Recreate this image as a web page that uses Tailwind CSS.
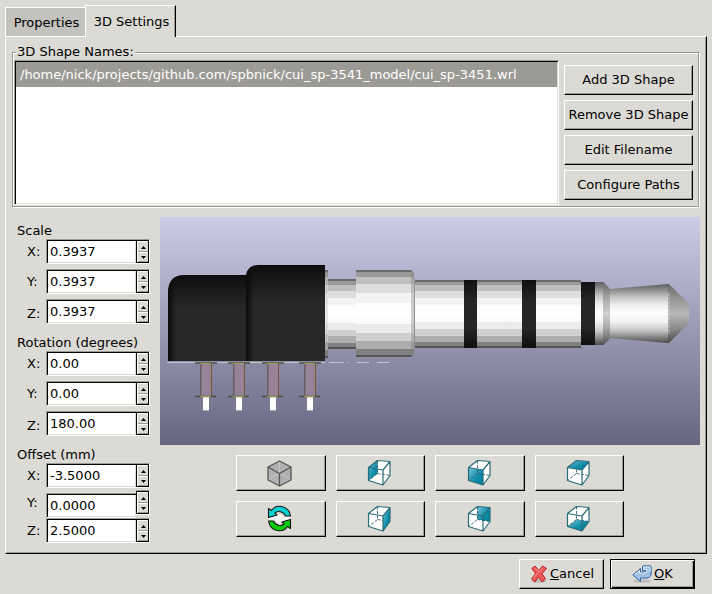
<!DOCTYPE html>
<html lang="en">
<head>
<meta charset="utf-8">
<title>3D Settings</title>
<script src="https://cdn.jsdelivr.net/npm/@tailwindcss/browser@4"></script>
</head>
<body class="flex min-h-screen flex-col bg-[#dcdad5] px-[5px] pt-[5px] font-['DejaVu_Sans',sans-serif] text-[13px] leading-4 text-black">

<!-- Shared drawing parts -->
<svg class="absolute h-0 w-0" aria-hidden="true">
  <defs>
    <linearGradient id="teal" x1="0" y1="0" x2="1" y2="1"><stop offset="0" stop-color="#7cc4dc"/><stop offset=".6" stop-color="#0a8ba6"/><stop offset="1" stop-color="#057f9b"/></linearGradient>
    <g id="hidden-edges" fill="none" stroke="#31606c" stroke-width=".9" stroke-dasharray="3 1.5"><path d="M10.500 1.500V14.500L1.500 21.500M10.500 14.500L23 16.500"/></g>
    <g id="edges" fill="none" stroke="#2b6c79" stroke-width="1.200" stroke-linejoin="round"><path d="M10.500 1.500L23 2.500L16 11L1.500 8.500ZM1.500 8.500V21.500L16 26V11M23 2.500V16.500L16 26"/></g>
    <path id="body" fill="#fff" d="M10.500 1.500L23 2.500V16.500L16 26L1.500 21.500V8.500Z"/>
  </defs>
</svg>

<div role="tablist" class="relative z-10 -mb-px flex items-end">
  <button role="tab" aria-selected="false" class="mb-px h-[29px] w-20 border-t border-l border-white bg-[#c4c2bd] pt-px pl-0.5 text-center">Properties</button>
  <button role="tab" aria-selected="true" class="h-8 w-[91px] border-t border-r border-l border-white border-r-black bg-[#dcdad5] pl-0.5 text-center shadow-[inset_-1px_0_0_#9c9a94]">3D Settings</button>
</div>

<main role="tabpanel" class="border border-white border-r-black border-b-black px-1.5 pt-[7px] pb-[10px] shadow-[inset_-1px_-1px_0_#9c9a94]">
  <fieldset class="mr-px border border-[#9c9a94] pr-[5px] pb-px pl-px shadow-[inset_1px_1px_0_#fff,1px_1px_0_#fff]">
    <legend class="ml-0.5 bg-[#dcdad5] px-px">3D Shape Names:</legend>
    <div class="flex gap-[5px]">
      <ul role="listbox" aria-label="3D Shape Names" class="h-[145px] min-w-0 flex-1 border border-[#9c9a94] border-r-white border-b-white bg-white pt-px pl-px shadow-[inset_1px_1px_0_#000,inset_-1px_-1px_0_#dcdad5]">
        <li role="option" aria-selected="true" class="mr-px h-[25px] truncate bg-[#9c9a94] pl-1 leading-[25px] text-white">/home/nick/projects/github.com/spbnick/cui_sp-3541_model/cui_sp-3451.wrl</li>
      </ul>
      <div class="flex w-[129px] flex-col gap-[5px] pt-[5px]">
        <button class="h-[30px] border border-white border-r-black border-b-black whitespace-nowrap shadow-[inset_-1px_-1px_0_#9c9a94]">Add 3D Shape</button>
        <button class="h-[30px] border border-white border-r-black border-b-black whitespace-nowrap shadow-[inset_-1px_-1px_0_#9c9a94]">Remove 3D Shape</button>
        <button class="h-[30px] border border-white border-r-black border-b-black whitespace-nowrap shadow-[inset_-1px_-1px_0_#9c9a94]">Edit Filename</button>
        <button class="h-[30px] border border-white border-r-black border-b-black whitespace-nowrap shadow-[inset_-1px_-1px_0_#9c9a94]">Configure Paths</button>
      </div>
    </div>
  </fieldset>

  <div class="mt-[10px] flex gap-[10px] pl-[5px]">
    <div id="fields" class="flex w-[133px] shrink-0 flex-col gap-[5px]"></div>

    <div class="min-w-0 flex-1">
      <svg role="img" aria-label="3D model preview" viewBox="0 0 540 228" class="block w-full">
        <defs>
          <linearGradient id="sky" x1="0" y1="0" x2="0" y2="1"><stop offset="0" stop-color="#cccce6"/><stop offset="1" stop-color="#666680"/></linearGradient>
          <linearGradient id="metal" x1="0" y1="0" x2="0" y2="1">
            <stop offset="0" stop-color="#6b6b6b"/><stop offset=".025" stop-color="#6b6b6b"/>
            <stop offset=".025" stop-color="#999"/><stop offset=".08" stop-color="#999"/>
            <stop offset=".08" stop-color="#bfbfbf"/><stop offset=".165" stop-color="#bfbfbf"/>
            <stop offset=".165" stop-color="#dedede"/><stop offset=".265" stop-color="#dedede"/>
            <stop offset=".265" stop-color="#f3f3f3"/><stop offset=".375" stop-color="#f3f3f3"/>
            <stop offset=".375" stop-color="#fcfcfc"/><stop offset=".5" stop-color="#fff"/><stop offset=".625" stop-color="#fafafa"/>
            <stop offset=".625" stop-color="#ebebeb"/><stop offset=".725" stop-color="#ebebeb"/>
            <stop offset=".725" stop-color="#d0d0d0"/><stop offset=".82" stop-color="#d0d0d0"/>
            <stop offset=".82" stop-color="#adadad"/><stop offset=".91" stop-color="#adadad"/>
            <stop offset=".91" stop-color="#808080"/><stop offset=".975" stop-color="#808080"/>
            <stop offset=".975" stop-color="#555"/><stop offset="1" stop-color="#555"/>
          </linearGradient>
          <linearGradient id="tip" x1="0" y1="0" x2="0" y2="1"><stop offset="0" stop-color="#5c5c5c"/><stop offset=".1" stop-color="#8c8c8c"/><stop offset=".22" stop-color="#c4c4c4"/><stop offset=".36" stop-color="#f0f0f0"/><stop offset=".5" stop-color="#fff"/><stop offset=".64" stop-color="#f2f2f2"/><stop offset=".78" stop-color="#c8c8c8"/><stop offset=".9" stop-color="#858585"/><stop offset="1" stop-color="#4a4a4a"/></linearGradient>
          <linearGradient id="cone" x1="0" y1="0" x2="0" y2="1"><stop offset="0" stop-color="#686868"/><stop offset=".25" stop-color="#959595"/><stop offset=".5" stop-color="#b8b8b8"/><stop offset=".75" stop-color="#8c8c8c"/><stop offset="1" stop-color="#4c4c4c"/></linearGradient>
          <linearGradient id="neck" x1="0" y1="0" x2="0" y2="1"><stop offset="0" stop-color="#666"/><stop offset=".3" stop-color="#b0b0b0"/><stop offset=".5" stop-color="#cfcfcf"/><stop offset=".7" stop-color="#b0b0b0"/><stop offset="1" stop-color="#555"/></linearGradient>
          <linearGradient id="black" x1="0" y1="0" x2="0" y2="1"><stop offset="0" stop-color="#0c0c0c"/><stop offset=".16" stop-color="#191919"/><stop offset=".38" stop-color="#282828"/><stop offset="1" stop-color="#282828"/></linearGradient>
          <linearGradient id="ring" x1="0" y1="0" x2="0" y2="1"><stop offset="0" stop-color="#101010"/><stop offset=".3" stop-color="#262626"/><stop offset=".7" stop-color="#262626"/><stop offset="1" stop-color="#101010"/></linearGradient>
          <linearGradient id="side" x1="0" y1="0" x2="1" y2="0"><stop offset="0" stop-color="#0a0a0a"/><stop offset="1" stop-color="#0a0a0a" stop-opacity="0"/></linearGradient>
          <g id="pin">
            <path fill="#665f62" d="M-6 0H6V33H-6Z"/><path fill="#968397" d="M-4.500 0H5V33H-4.500Z"/><path stroke="#765735" d="M5.500 1V32"/>
            <path fill="#fff" d="M-3 34H3V47H-3Z"/><path fill="#aaa" d="M-3 47H3V48H-3Z"/>
            <path stroke="#47503c" stroke-width="1.300" d="M-11 0H11M-11 33.500H10"/><path stroke="#a19a55" d="M-6 0.500H5M-6 33.500H5"/>
          </g>
        </defs>
        <rect width="540" height="228" fill="url(#sky)"/>
        <path stroke="#c4c3cc" d="M7 145.500H165M169 145.500H184M188 145.500H189M197 145.500H209M217 145.500H229"/>
        <rect x="164" y="53" width="4" height="88" fill="url(#metal)"/><rect x="164" y="53" width="4" height="88" fill="#666" opacity=".15"/>
        <rect x="168" y="62" width="28" height="70" fill="url(#metal)"/>
        <path d="M196 53H251L254 56V137L251 140H196Z" fill="url(#metal)"/>
        <path d="M251 53L254 56V137L251 140Z" fill="#777" opacity=".35"/>
        <rect x="255" y="63" width="166" height="68" fill="url(#metal)"/>
        <path stroke="#888" opacity=".6" d="M254.500 60V133"/>
        <rect x="304" y="63" width="13" height="68" fill="url(#ring)"/>
        <rect x="362" y="63" width="14" height="68" fill="url(#ring)"/>
        <rect x="421" y="65" width="14" height="63" fill="url(#ring)"/>
        <path d="M435 65H443L450 72V122L443 128H435Z" fill="url(#tip)"/>
        <path d="M443 65L450 72V121L443 128Z" fill="url(#neck)"/>
        <path d="M450 72L508 67L510 68V125L508 126L450 121Z" fill="url(#tip)"/>
        <path d="M508 67L511 69L529 87V106L511 124L508 126Z" fill="url(#cone)"/>
        <path fill="none" stroke="#ddd" stroke-dasharray="3 1" opacity=".7" d="M509 76V117"/>
        <use href="#pin" x="46" y="146"/><use href="#pin" x="79" y="146"/><use href="#pin" x="113" y="146"/><use href="#pin" x="150" y="146"/>
        <path fill="url(#black)" d="M8 144V74Q9 58 24 58H88V144Z"/>
        <path fill="url(#side)" d="M8 144V74Q9 64 16 60V144Z"/>
        <path fill="url(#black)" d="M86 144V58Q88 48 98 48H165V144Z"/>
        <path fill="url(#side)" d="M86 144V58Q87 52 94 49V144Z"/>
      </svg>

      <div id="views" class="mx-auto mt-[10px] grid w-[388px] grid-cols-4 gap-[10px]">
        <button aria-label="Orthographic view" class="flex h-9 items-center justify-center border border-white border-r-black border-b-black pr-0.5 shadow-[inset_-1px_-1px_0_#9c9a94]">
          <svg class="h-[27px] w-[25px]" viewBox="0 0 25 27"><path fill="#b0b0b0" stroke="#555" stroke-width="1.300" stroke-linejoin="round" d="M12.500 1L24 7V20L12.500 26L1 20V7Z"/><path fill="none" stroke="#c8c8c8" d="M12.500 2V13L2 19M12.500 13L23 19"/><path fill="none" stroke="#555" stroke-width="1.300" d="M1 7L12.500 13.500L24 7M12.500 13.500V26"/></svg>
        </button>
        <button aria-label="Left view" class="flex h-9 items-center justify-center border border-white border-r-black border-b-black pr-0.5 pb-0.5 shadow-[inset_-1px_-1px_0_#9c9a94]">
          <svg class="h-[27px] w-6" viewBox="0 0 24 27"><use href="#body"/><path fill="url(#teal)" d="M10.500 1.500V14.500L1.500 21.500V8.500Z"/><use href="#hidden-edges"/><use href="#edges"/></svg>
        </button>
        <button aria-label="Front view" class="flex h-9 items-center justify-center border border-white border-r-black border-b-black pr-0.5 pb-0.5 shadow-[inset_-1px_-1px_0_#9c9a94]">
          <svg class="h-[27px] w-6" viewBox="0 0 24 27"><use href="#body"/><path fill="url(#teal)" d="M1.500 8.500L16 11V26L1.500 21.500Z"/><use href="#hidden-edges"/><use href="#edges"/></svg>
        </button>
        <button aria-label="Top view" class="flex h-9 items-center justify-center border border-white border-r-black border-b-black pr-0.5 pb-0.5 shadow-[inset_-1px_-1px_0_#9c9a94]">
          <svg class="h-[27px] w-6" viewBox="0 0 24 27"><use href="#body"/><use href="#hidden-edges"/><path fill="url(#teal)" d="M10.500 1.500L23 2.500L16 11L1.500 8.500Z"/><use href="#edges"/></svg>
        </button>
        <button aria-label="Reload" class="flex h-9 items-center justify-center border border-white border-r-black border-b-black pr-0.5 pb-0.5 shadow-[inset_-1px_-1px_0_#9c9a94]">
          <svg class="h-[27px] w-[25px]" viewBox="0 0 25 27" stroke="#151515" stroke-width="1.100" stroke-linejoin="round"><path fill="#f4f4f2" stroke="none" d="M2 12.500L10 10.500Q13 7.500 17 11.500L23 12V14.500L15 16.500Q12 19.500 8 15.500L2 15Z"/><path fill="#0cd0d0" d="M1.500 3.500L4.500 5.500C8.500 -.8 21.500 -.8 23.500 11H18.500C16.500 6 10.500 5.500 8 8L10 10L1.500 12.500Z"/><path fill="#05cc0a" d="M23.500 23.500L20.500 21.500C16.500 27.800 3.500 27.800 1.500 16H6.500C8.500 21 14.500 21.500 17 19L15 17L23.500 14.500Z"/></svg>
        </button>
        <button aria-label="Right view" class="flex h-9 items-center justify-center border border-white border-r-black border-b-black pr-0.5 pb-0.5 shadow-[inset_-1px_-1px_0_#9c9a94]">
          <svg class="h-[27px] w-6" viewBox="0 0 24 27"><use href="#body"/><use href="#hidden-edges"/><path fill="url(#teal)" d="M16 11L23 2.500V16.500L16 26Z"/><use href="#edges"/></svg>
        </button>
        <button aria-label="Back view" class="flex h-9 items-center justify-center border border-white border-r-black border-b-black pr-0.5 pb-0.5 shadow-[inset_-1px_-1px_0_#9c9a94]">
          <svg class="h-[27px] w-6" viewBox="0 0 24 27"><use href="#body"/><path fill="url(#teal)" d="M10.500 1.500L23 2.500V16.500L10.500 14.500Z"/><use href="#hidden-edges"/><use href="#edges"/></svg>
        </button>
        <button aria-label="Bottom view" class="flex h-9 items-center justify-center border border-white border-r-black border-b-black pr-0.5 pb-0.5 shadow-[inset_-1px_-1px_0_#9c9a94]">
          <svg class="h-[27px] w-6" viewBox="0 0 24 27"><use href="#body"/><path fill="url(#teal)" d="M10.500 14.500L23 16.500L16 26L1.500 21.500Z"/><use href="#hidden-edges"/><use href="#edges"/></svg>
        </button>
      </div>
    </div>
  </div>
</main>

<footer class="flex justify-end gap-1.5 py-[5px] pr-3">
  <button class="flex h-[30px] w-[85px] items-center justify-center gap-[3px] border border-white border-r-black border-b-black pl-0.5 shadow-[inset_-1px_-1px_0_#9c9a94]">
    <svg class="h-[18px] w-4" viewBox="0 0 16 18"><ellipse cx="8" cy="16" rx="8" ry="2" fill="#000" opacity=".12"/><path fill="#ee5a5a" stroke="#bd1f26" stroke-linejoin="round" d="M4 1L8 5.500L11.500 1L15.500 3.500L11 8.500L14.500 14L11 17L7.500 12L4 17L.6 14L4.500 8.500L.8 3.500Z"/><path fill="none" stroke="#f79a96" d="M4 2.500L8 7L12 2.500M2 14L6 8.500"/></svg>
    <span><u>C</u>ancel</span>
  </button>
  <button class="flex h-[30px] w-[85px] items-center justify-center gap-0.5 border border-black shadow-[inset_1px_1px_0_#fff,inset_-1px_-1px_0_#000,inset_-2px_-2px_0_#9c9a94]">
    <svg class="h-[18px] w-5" viewBox="0 0 20 18"><ellipse cx="10" cy="16" rx="9" ry="2" fill="#000" opacity=".12"/><path fill="#9fc1e6" stroke="#3566a5" stroke-linejoin="round" d="M.8 10L8.500 3.500V7H12Q14 7 14 5.500H10.500V1.500Q10.500 .8 11.500 .8H18Q19.200 .8 19.200 2V8Q19 13 14 13H8.500V16.500Z"/><path fill="none" stroke="#dbe9f7" d="M2.500 10L7.500 5.800V8.200H12Q15.300 8 15.300 4.500H11.800V2H18V7"/></svg>
    <span><u>O</u>K</span>
  </button>
</footer>

<script>
  const groups = [
    ['Scale', ['0.3937', '0.3937', '0.3937']],
    ['Rotation (degrees)', ['0.00', '0.00', '180.00']],
    ['Offset (mm)', ['-3.5000', '0.0000', '2.5000']]
  ];
  const field = (title, axis, value, compact) => {
    const id = title.split(' ')[0].toLowerCase() + '-' + axis.toLowerCase();
    const row = compact && axis === 'Y' ? 'flex h-7 items-start' : 'flex h-[25px] items-start';
    const box = compact && axis === 'Y' ? 'self-end' : '';
    const line = axis === 'Z' && !compact ? 'leading-[30px]' : 'leading-[26px]';
    const arrow = (label, path, cls) => `<button aria-label="${label} ${id}" class="flex items-center justify-center border-t border-l border-white bg-[#dcdad5] shadow-[inset_0_-1px_0_#9c9a94] ${cls}"><svg class="h-[3px] w-[5px]" viewBox="0 0 5 3"><path d="${path}"/></svg></button>`;
    return `<div class="${row}">
      <label for="${id}" class="w-[29px] shrink-0 pl-[10px] ${line}">${axis}:</label>
      <input id="${id}" value="${value}" class="h-[25px] w-0 min-w-0 flex-1 border border-[#9c9a94] border-r-0 border-b-white bg-white pl-[3px] shadow-[inset_1px_1px_0_#000,inset_-1px_-1px_0_#dcdad5] outline-none ${box}">
      <div class="flex h-[25px] w-[14px] flex-col border-t border-r border-b border-t-[#9c9a94] border-r-white border-b-white bg-black p-px">
        ${arrow('Increase', 'M2.500 0L5 3H0Z', 'h-[11px]')}${arrow('Decrease', 'M0 0H5L2.500 3Z', 'h-[10px]')}
      </div></div>`;
  };
  document.getElementById('fields').innerHTML = groups.map(([title, values]) => {
    const compact = title === 'Offset (mm)';
    const rows = values.map((v, i) => field(title, 'XYZ'[i], v, compact));
    const body = compact
      ? `<div>${rows[0]}<div class="mt-0.5">${rows[1]}</div>${rows[2]}</div>`
      : `<div class="flex flex-col gap-[5px]">${rows.join('')}</div>`;
    return `<section><h2 class="h-[22px] pt-1 leading-5 whitespace-nowrap">${title}</h2>${body}</section>`;
  }).join('');
</script>
</body>
</html>
